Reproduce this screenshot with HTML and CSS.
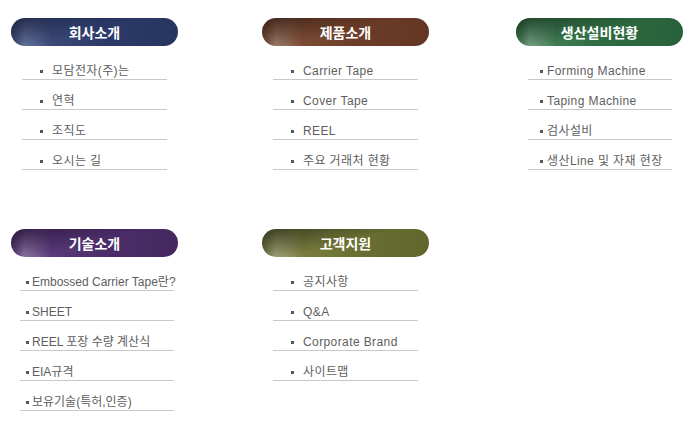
FILE: index.html
```
<!DOCTYPE html>
<html lang="ko">
<head>
    <meta charset="UTF-8">
    <title>사이트맵</title>
    <link rel="stylesheet" href="styles.css">
</head>
<body>
    <div class="sitemap">
        <section class="menu">
            <h2 class="pill pill-navy">회사소개</h2>
            <ul class="links links-a">
                <li>모담전자(주)는</li>
                <li>연혁</li>
                <li>조직도</li>
                <li>오시는 길</li>
            </ul>
        </section>
        <section class="menu">
            <h2 class="pill pill-brown">제품소개</h2>
            <ul class="links links-a">
                <li>Carrier Tape</li>
                <li>Cover Tape</li>
                <li>REEL</li>
                <li>주요 거래처 현황</li>
            </ul>
        </section>
        <section class="menu">
            <h2 class="pill pill-green">생산설비현황</h2>
            <ul class="links links-b">
                <li>Forming Machine</li>
                <li>Taping Machine</li>
                <li>검사설비</li>
                <li>생산Line 및 자재 현장</li>
            </ul>
        </section>
        <section class="menu">
            <h2 class="pill pill-purple">기술소개</h2>
            <ul class="links links-c">
                <li>Embossed Carrier Tape란?</li>
                <li>SHEET</li>
                <li>REEL 포장 수량 계산식</li>
                <li>EIA규격</li>
                <li>보유기술(특허,인증)</li>
            </ul>
        </section>
        <section class="menu">
            <h2 class="pill pill-olive">고객지원</h2>
            <ul class="links links-a">
                <li>공지사항</li>
                <li>Q&amp;A</li>
                <li>Corporate Brand</li>
                <li>사이트맵</li>
            </ul>
        </section>
    </div>
</body>
</html>
```
FILE: styles.css
```
/* Sitemap */
body {
    margin: 0;
    background: #fff;
    font-family: "Liberation Sans", "Noto Sans CJK KR", sans-serif;
    color: #5e5e5e;
}

.sitemap {
    display: grid;
    grid-template-columns: 251px 254px 167px;
    row-gap: 59px;
    padding: 18px 0 0 11px;
}

.menu {
    width: 167px;
}

.pill {
    margin: 0;
    height: 28px;
    line-height: 28px;
    border-radius: 14px;
    text-align: center;
    color: #fff;
    font-family: "Noto Sans CJK KR", sans-serif;
    font-size: 14px;
    font-weight: bold;
}

/* glossy highlight on the left side of each pill */
.pill-navy {
    background: linear-gradient(165deg, #1c2546 0%, transparent 50%),
                linear-gradient(to right, #3a4774 0%, #6d7ba2 8%, #3c4a7a 24%, #2c3a6a 55%, #26345f 100%);
}

.pill-brown {
    background: linear-gradient(165deg, #3a2014 0%, transparent 50%),
                linear-gradient(to right, #774c38 0%, #a88676 8%, #7d4c36 24%, #6c3d28 55%, #633624 100%);
}

.pill-green {
    background: linear-gradient(165deg, #173a22 0%, transparent 50%),
                linear-gradient(to right, #3a7550 0%, #80ad8e 8%, #3d7a50 24%, #2e6a40 55%, #27613a 100%);
}

.pill-purple {
    background: linear-gradient(165deg, #2a163e 0%, transparent 50%),
                linear-gradient(to right, #5a3b75 0%, #957fab 8%, #5b3a7a 24%, #4c2d6a 55%, #45285f 100%);
}

.pill-olive {
    background: linear-gradient(165deg, #33361a 0%, transparent 50%),
                linear-gradient(to right, #767a40 0%, #adae82 8%, #7a7e40 24%, #6a6f32 55%, #61662d 100%);
}

.links {
    list-style: none;
    margin: 4px 0 0;
    padding: 0;
    font-size: 12px;
    letter-spacing: 0.4px;
}

.links li {
    position: relative;
    padding-top: 13px;
    line-height: 16px;
    border-bottom: 1px solid #c8c8c8;
    white-space: nowrap;
}

.links li::before {
    content: "";
    position: absolute;
    top: 20px;
    width: 3px;
    height: 3px;
    background: #555;
}

.links-a {
    margin-left: 11px;
    width: 145px;
}

.links-a li {
    padding-left: 30px;
}

.links-a li::before {
    left: 18px;
}

.links-b {
    margin-left: 12px;
    width: 144px;
}

.links-b li {
    padding-left: 19px;
}

.links-b li::before {
    left: 12px;
}

.links-c {
    margin-left: 9px;
    width: 154px;
}

.links-c li {
    padding-left: 12px;
    letter-spacing: 0;
}

.links-c li::before {
    left: 6px;
}
```
